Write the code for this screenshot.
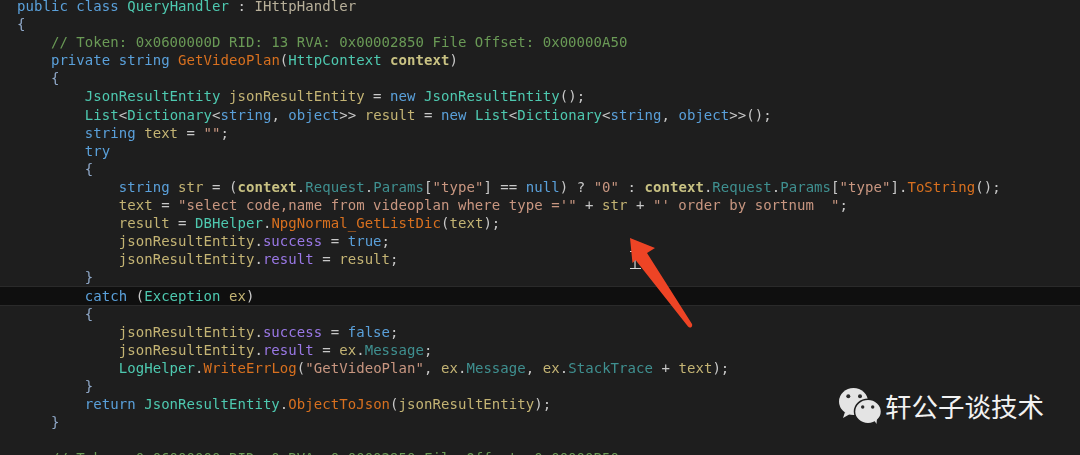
const kw = 'text-[#5aa0da]'
const ty = 'text-[#4ec9b0]'
const cm = 'text-[#6a9a56]'
const fn = 'text-[#d8701f]'
const st = 'text-[#c89680]'
const lo = 'text-[#c4b474]'
const pa = 'text-[#c9c283] font-bold'
const pr = 'text-[#3f9090]'
const fd = 'text-[#9a78e6]'
const pl = 'text-[#c8c8c8]'
const br = 'text-[#8fa8c8]'

type Seg = [string, string]

const lines: Seg[][] = [
  [[kw, 'public class '], [ty, 'QueryHandler'], [pl, ' : '], ['text-[#b8b09a]', 'IHttpHandler']],
  [[br, '{']],
  [[cm, '    // Token: 0x0600000D RID: 13 RVA: 0x00002850 File Offset: 0x00000A50']],
  [[kw, '    private string '], [fn, 'GetVideoPlan'], [pl, '('], [ty, 'HttpContext '], [pa, 'context'], [pl, ')']],
  [[br, '    {']],
  [[ty, '        JsonResultEntity '], [lo, 'jsonResultEntity'], [pl, ' = '], [kw, 'new '], [ty, 'JsonResultEntity'], [pl, '();']],
  [[ty, '        List'], [pl, '<'], [ty, 'Dictionary'], [pl, '<'], [kw, 'string'], [pl, ', '], [kw, 'object'], [pl, '>> '], [lo, 'result'], [pl, ' = '], [kw, 'new '], [ty, 'List'], [pl, '<'], [ty, 'Dictionary'], [pl, '<'], [kw, 'string'], [pl, ', '], [kw, 'object'], [pl, '>>();']],
  [[kw, '        string '], [lo, 'text'], [pl, ' = '], [st, '""'], [pl, ';']],
  [[kw, '        try']],
  [[br, '        {']],
  [[kw, '            string '], [lo, 'str'], [pl, ' = ('], [pa, 'context'], [pl, '.'], [pr, 'Request'], [pl, '.'], [pr, 'Params'], [pl, '['], [st, '"type"'], [pl, '] == '], [kw, 'null'], [pl, ') ? '], [st, '"0"'], [pl, ' : '], [pa, 'context'], [pl, '.'], [pr, 'Request'], [pl, '.'], [pr, 'Params'], [pl, '['], [st, '"type"'], [pl, '].'], [fn, 'ToString'], [pl, '();']],
  [[lo, '            text'], [pl, ' = '], [st, '"select code,name from videoplan where type =\'"'], [pl, ' + '], [lo, 'str'], [pl, ' + '], [st, '"\' order by sortnum  "'], [pl, ';']],
  [[lo, '            result'], [pl, ' = '], [ty, 'DBHelper'], [pl, '.'], [fn, 'NpgNormal_GetListDic'], [pl, '('], [lo, 'text'], [pl, ');']],
  [[lo, '            jsonResultEntity'], [pl, '.'], [fd, 'success'], [pl, ' = '], [kw, 'true'], [pl, ';']],
  [[lo, '            jsonResultEntity'], [pl, '.'], [fd, 'result'], [pl, ' = '], [lo, 'result'], [pl, ';']],
  [[br, '        }']],
  [[kw, '        catch '], [pl, '('], [ty, 'Exception '], [lo, 'ex'], [pl, ')']],
  [[br, '        {']],
  [[lo, '            jsonResultEntity'], [pl, '.'], [fd, 'success'], [pl, ' = '], [kw, 'false'], [pl, ';']],
  [[lo, '            jsonResultEntity'], [pl, '.'], [fd, 'result'], [pl, ' = '], [lo, 'ex'], [pl, '.'], [pr, 'Message'], [pl, ';']],
  [[ty, '            LogHelper'], [pl, '.'], [fn, 'WriteErrLog'], [pl, '('], [st, '"GetVideoPlan"'], [pl, ', '], [lo, 'ex'], [pl, '.'], [pr, 'Message'], [pl, ', '], [lo, 'ex'], [pl, '.'], [pr, 'StackTrace'], [pl, ' + '], [lo, 'text'], [pl, ');']],
  [[br, '        }']],
  [[kw, '        return '], [ty, 'JsonResultEntity'], [pl, '.'], [fn, 'ObjectToJson'], [pl, '('], [lo, 'jsonResultEntity'], [pl, ');']],
  [[br, '    }']],
  [[pl, ' ']],
  [[cm, '    // Token: 0x06000000 RID: 0 RVA: 0x00002950 File Offset: 0x00000B50']],
]

function WeChatMark() {
  return (
    <svg width="46" height="40" viewBox="0 0 46 40" className="absolute left-[837px] top-[387px]">
      <ellipse cx="16.500" cy="14.500" rx="14.500" ry="13.500" fill="#e4e4e4" />
      <path d="M8 25L6 31L13 27Z" fill="#e4e4e4" />
      <ellipse cx="31" cy="24.500" rx="13.500" ry="12.200" fill="#e4e4e4" stroke="#1e1e1e" strokeWidth="1.500" />
      <path d="M37 33L39.500 37L40 31Z" fill="#e4e4e4" />
      <circle cx="11.300" cy="9.300" r="2" fill="#2a2a2a" />
      <circle cx="23" cy="9.300" r="2" fill="#2a2a2a" />
      <circle cx="25.700" cy="20" r="1.700" fill="#2a2a2a" />
      <circle cx="35.700" cy="20" r="1.700" fill="#2a2a2a" />
    </svg>
  )
}

function ArrowMark() {
  return (
    <svg width="72" height="96" viewBox="0 0 72 96" className="absolute left-[625px] top-[235px]">
      <path d="M5 16.500h3M10 16v17M5 33.500h11" fill="none" stroke="#d8d8d8" strokeWidth="1.200" />
      <path d="M5 3L30 13L22 18L67 89C68 92.500 64.500 93.500 63 91.500L10.500 25L7.500 28Z" fill="#ee4425" />
    </svg>
  )
}

export default function App() {
  return (
    <div className="relative w-[1080px] h-[455px] overflow-hidden bg-[#1e1e1e]">
      <div className="-mt-[3px] pl-[17px] font-['DejaVu_Sans_Mono',monospace] text-[14px] leading-[18.1px] tracking-[0.05px] whitespace-pre blur-[0.3px]">
        {lines.map((segs, i) => (
          <div
            key={i}
            className={i === 16 ? '-ml-[17px] pl-[17px] bg-[#0f0f0f] shadow-[0_0_0_1px_#2a2a2a]' : ''}
          >
            {segs.map(([cls, txt], j) => (
              <span key={j} className={cls}>{txt}</span>
            ))}
          </div>
        ))}
      </div>
      <ArrowMark />
      <WeChatMark />
      <div className="absolute left-[885px] top-[388px] font-['Noto_Sans_CJK_SC',sans-serif] text-[26.500px] leading-[36px] text-[#f2f2f2]">
        轩公子谈技术
      </div>
    </div>
  )
}
